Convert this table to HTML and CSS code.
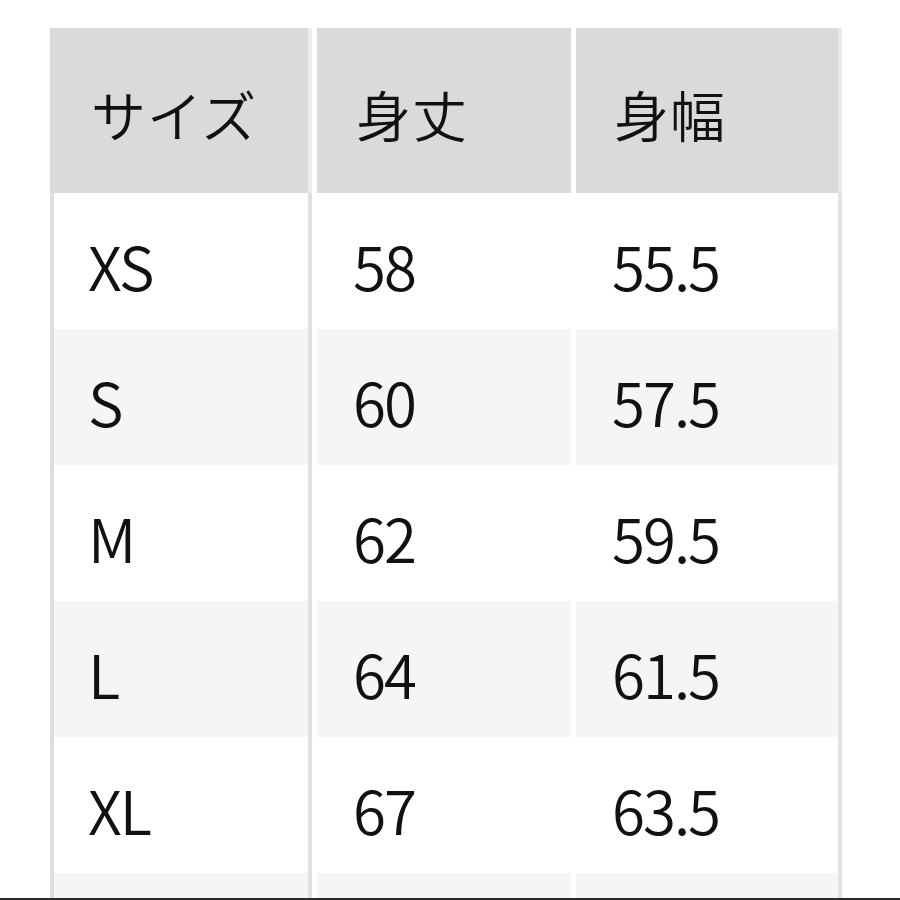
FILE: index.html
```html
<!DOCTYPE html>
<html lang="ja">
<head>
<meta charset="utf-8">
<link rel="stylesheet" href="styles.css">
</head>
<body>
<div class="table">
  <div class="row head">
    <div class="cell c1">サイズ</div>
    <div class="cell c2">身丈</div>
    <div class="cell c3">身幅</div>
  </div>
  <div class="row">
    <div class="cell c1">XS</div>
    <div class="cell c2">58</div>
    <div class="cell c3">55.5</div>
  </div>
  <div class="row alt">
    <div class="cell c1">S</div>
    <div class="cell c2">60</div>
    <div class="cell c3">57.5</div>
  </div>
  <div class="row">
    <div class="cell c1">M</div>
    <div class="cell c2">62</div>
    <div class="cell c3">59.5</div>
  </div>
  <div class="row alt">
    <div class="cell c1">L</div>
    <div class="cell c2">64</div>
    <div class="cell c3">61.5</div>
  </div>
  <div class="row">
    <div class="cell c1">XL</div>
    <div class="cell c2">67</div>
    <div class="cell c3">63.5</div>
  </div>
  <div class="row alt last">
    <div class="cell c1"></div>
    <div class="cell c2"></div>
    <div class="cell c3"></div>
  </div>
</div>
<div class="edge"></div>
</body>
</html>
```
FILE: styles.css
```css
html, body {
  margin: 0;
  padding: 0;
  background: #ffffff;
}
body {
  width: 900px;
  height: 900px;
  overflow: hidden;
  font-family: "Noto Sans CJK JP", "Noto Sans", sans-serif;
  font-weight: 350;
  color: #111111;
}
.table {
  margin: 28px 0 0 50px;
  width: 792px;
}
.row {
  display: grid;
  grid-template-columns: 262px 254px 266px;
  column-gap: 5px;
  height: 136px;
}
.cell {
  display: flex;
  align-items: center;
  box-sizing: border-box;
  font-size: 60px;
  letter-spacing: -2px;
  line-height: 1;
  padding-top: 8px;
}
.row .c1 {
  border-left: 4px solid #dedede;
  border-right: 4px solid #e0e0e0;
  padding-left: 34px;
}
.row .c2 {
  padding-left: 36px;
}
.row .c3 {
  border-right: 4px solid #e2e2e2;
  padding-left: 36px;
}
.row.alt .cell {
  background: #f5f5f5;
}
.row.head {
  height: 165px;
}
.row.head .cell {
  background: #dadada;
  font-size: 55px;
  letter-spacing: 1px;
  padding-top: 6px;
}
.row.head .c1 {
  border-left-color: #dadada;
  border-right-color: #ececec;
  padding-left: 37px;
}
.row.head .c2 {
  padding-left: 39px;
}
.row.head .c3 {
  border-right-color: #e8e8e8;
  padding-left: 38px;
}
.row.last {
  height: 25px;
}
.edge {
  height: 2px;
  background: #2b2b2b;
  width: 900px;
}
```
